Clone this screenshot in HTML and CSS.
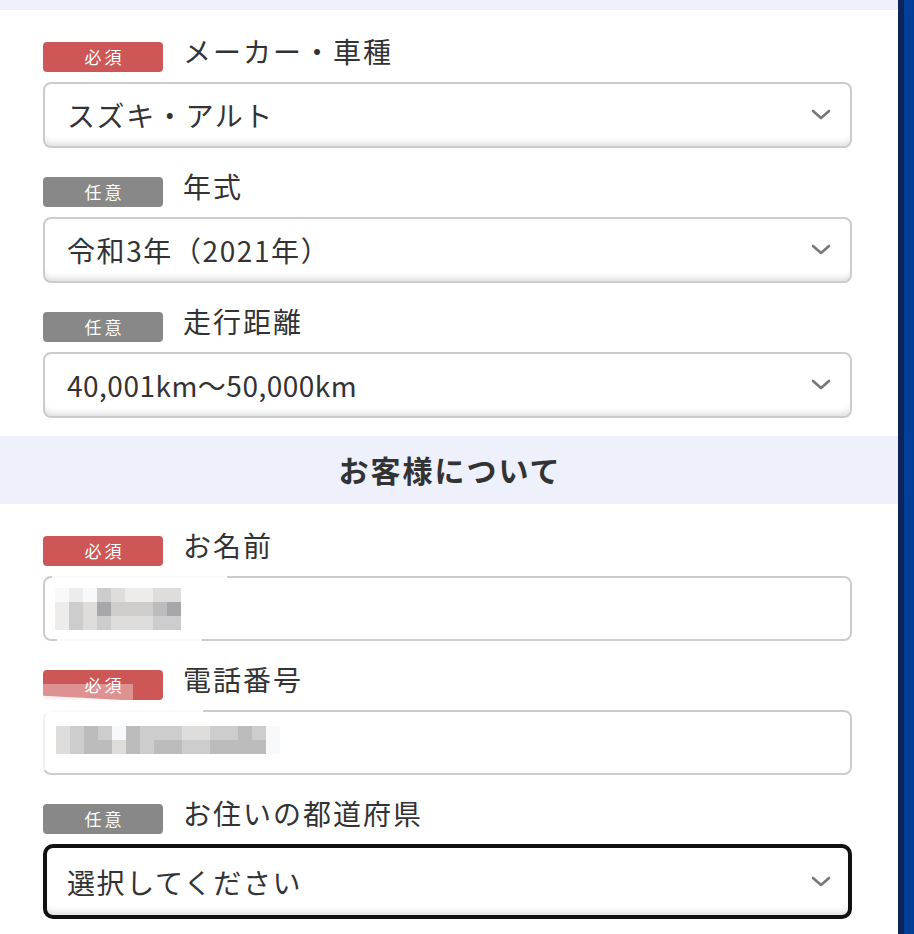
FILE: index.html
```html
<!DOCTYPE html>
<html lang="ja">
<head>
    <meta charset="UTF-8">
    <meta name="viewport" content="width=device-width, initial-scale=1.0">
    <title>車両情報・お客様情報</title>
    <link rel="stylesheet" href="styles.css">
</head>
<body>
    <div class="page">
        <div class="band-top"></div>

        <section class="group">
            <div class="field">
                <div class="field-head">
                    <span class="badge badge-req">必須</span>
                    <label class="field-label" for="car">メーカー・車種</label>
                </div>
                <div class="select-wrap">
                    <select class="control" id="car"><option>スズキ・アルト</option></select>
                    <svg class="chevron" viewBox="0 0 20 11"><path d="M2 2L10 9L18 2"/></svg>
                </div>
            </div>

            <div class="field">
                <div class="field-head">
                    <span class="badge badge-opt">任意</span>
                    <label class="field-label" for="year">年式</label>
                </div>
                <div class="select-wrap">
                    <select class="control" id="year"><option>令和3年（2021年）</option></select>
                    <svg class="chevron" viewBox="0 0 20 11"><path d="M2 2L10 9L18 2"/></svg>
                </div>
            </div>

            <div class="field">
                <div class="field-head">
                    <span class="badge badge-opt">任意</span>
                    <label class="field-label" for="mileage">走行距離</label>
                </div>
                <div class="select-wrap">
                    <select class="control control-latin" id="mileage"><option>40,001km～50,000km</option></select>
                    <svg class="chevron" viewBox="0 0 20 11"><path d="M2 2L10 9L18 2"/></svg>
                </div>
            </div>
        </section>

        <h2 class="section-title">お客様について</h2>

        <section class="group">
            <div class="field">
                <div class="field-head">
                    <span class="badge badge-req">必須</span>
                    <label class="field-label" for="name">お名前</label>
                </div>
                <div class="input-wrap">
                    <input class="control control-text" type="text" id="name">
                    <!-- redacted value -->
                    <div class="redact redact-name">
                        <i class="s0"></i><i class="s1"></i><i class="s0"></i><i class="s3"></i><i class="s2"></i><i class="s1"></i><i class="s1"></i><i class="s2"></i><i class="s2"></i>
                        <i class="s1"></i><i class="s3"></i><i class="s2"></i><i class="s5"></i><i class="s3"></i><i class="s3"></i><i class="s3"></i><i class="s4"></i><i class="s5"></i>
                        <i class="s1"></i><i class="s3"></i><i class="s2"></i><i class="s3"></i><i class="s2"></i><i class="s2"></i><i class="s2"></i><i class="s3"></i><i class="s3"></i>
                    </div>
                </div>
                <div class="smear smear-name-top"></div>
                <div class="smear smear-name-bottom"></div>
            </div>

            <div class="field">
                <div class="field-head">
                    <span class="badge badge-req">必須</span>
                    <label class="field-label" for="tel">電話番号</label>
                </div>
                <div class="input-wrap">
                    <input class="control control-text" type="tel" id="tel">
                    <div class="redact redact-tel">
                        <i class="s2"></i><i class="s3"></i><i class="s4"></i><i class="s3"></i><i class="s0"></i><i class="s4"></i><i class="s3"></i><i class="s3"></i><i class="s3"></i><i class="s2"></i><i class="s2"></i><i class="s3"></i><i class="s3"></i><i class="s4"></i><i class="s3"></i><i class="s0"></i>
                        <i class="s2"></i><i class="s3"></i><i class="s4"></i><i class="s4"></i><i class="s2"></i><i class="s4"></i><i class="s3"></i><i class="s4"></i><i class="s4"></i><i class="s3"></i><i class="s3"></i><i class="s4"></i><i class="s4"></i><i class="s4"></i><i class="s4"></i><i class="s0"></i>
                    </div>
                </div>
                <div class="smear smear-tel-badge"></div>
                <div class="smear smear-tel-top"></div>
                <div class="smear smear-tel-left"></div>
            </div>

            <div class="field">
                <div class="field-head">
                    <span class="badge badge-opt">任意</span>
                    <label class="field-label" for="pref">お住いの都道府県</label>
                </div>
                <div class="select-wrap">
                    <select class="control control-focus" id="pref"><option>選択してください</option></select>
                    <svg class="chevron" viewBox="0 0 20 11"><path d="M2 2L10 9L18 2"/></svg>
                </div>
            </div>
        </section>
    </div>
</body>
</html>
```

FILE: styles.css
```css
body {
    margin: 0;
    padding: 0;
    background-color: #003f97;
    font-family: "Noto Sans CJK JP", "Noto Sans", sans-serif;
    color: #333333;
}
.page {
    background-color: #ffffff;
    border-right: 6px solid #0d2458;
    margin-right: 10px;
    min-height: 100vh;
}
.band-top {
    height: 10px;
    background-color: #eef0fc;
}
.group {
    display: flex;
    flex-direction: column;
    gap: 29px;
    padding: 32px 46px 18px 43px;
}
.section-title {
    margin: 0;
    height: 68px;
    line-height: 66px;
    background-color: #eef0fc;
    text-align: center;
    font-size: 30px;
    font-weight: bold;
    letter-spacing: 2px;
    text-indent: 2px;
    color: #333333;
}
.field {
    position: relative;
    display: flex;
    flex-direction: column;
    gap: 10px;
}
.field-head {
    display: flex;
    align-items: flex-start;
    height: 30px;
}
.badge {
    width: 120px;
    height: 30px;
    line-height: 30px;
    border-radius: 4px;
    color: #ffffff;
    font-size: 17px;
    letter-spacing: 3px;
    text-indent: 3px;
    text-align: center;
    flex-shrink: 0;
}
.badge-req {
    background-color: #cd5757;
}
.badge-opt {
    background-color: #888888;
}
.field-label {
    margin-left: 20px;
    margin-top: -6px;
    font-size: 28px;
    line-height: 30px;
    letter-spacing: 2px;
    color: #333333;
}
.select-wrap, .input-wrap {
    position: relative;
}
.control {
    display: block;
    width: 100%;
    height: 66px;
    box-sizing: border-box;
    margin: 0;
    padding: 0 60px 0 22px;
    border: 2px solid #cccccc;
    border-radius: 8px;
    background-color: #ffffff;
    box-shadow: inset 0 -7px 6px -4px rgba(0, 0, 0, 0.13);
    font-family: inherit;
    font-size: 28px;
    letter-spacing: 1.6px;
    color: #333333;
    appearance: none;
    -webkit-appearance: none;
    outline: none;
}
.control-latin {
    letter-spacing: 0.5px;
}
.control-text {
    height: 65px;
    box-shadow: none;
}
.control-focus {
    height: 75px;
    border: 4px solid #111111;
    border-radius: 10px;
    padding-left: 20px;
}
.chevron {
    position: absolute;
    right: 21px;
    top: 50%;
    width: 20px;
    height: 11px;
    margin-top: -6px;
    fill: none;
    stroke: #777777;
    stroke-width: 2.6;
    stroke-linecap: round;
    stroke-linejoin: round;
    pointer-events: none;
}
.redact {
    position: absolute;
    display: grid;
    grid-auto-rows: 14px;
}
.redact i {
    display: block;
}
.redact-name {
    left: 12px;
    top: 12px;
    grid-template-columns: repeat(9, 14px);
}
.redact-tel {
    left: 13px;
    top: 16px;
    grid-template-columns: repeat(16, 14px);
}
.s0 { background-color: #f8f9fa; }
.s1 { background-color: #eeecea; }
.s2 { background-color: #dedddb; }
.s3 { background-color: #cdcdcd; }
.s4 { background-color: #bcbcbd; }
.s5 { background-color: #a6a7aa; }
.smear {
    position: absolute;
    background-color: rgba(255, 255, 255, 0.9);
}
.smear-name-top {
    left: 9px;
    top: 34px;
    width: 175px;
    height: 12px;
    transform: skewY(2deg);
}
.smear-name-bottom {
    left: 14px;
    top: 100px;
    width: 145px;
    height: 8px;
}
.smear-tel-badge {
    left: 0;
    top: 14px;
    width: 90px;
    height: 16px;
    background-color: rgba(255, 255, 255, 0.35);
}
.smear-tel-top {
    left: 0;
    top: 30px;
    width: 160px;
    height: 18px;
    transform: skewY(3deg);
}
.smear-tel-left {
    left: 0;
    top: 40px;
    width: 7px;
    height: 60px;
    background-color: rgba(255, 255, 255, 0.75);
}
```
